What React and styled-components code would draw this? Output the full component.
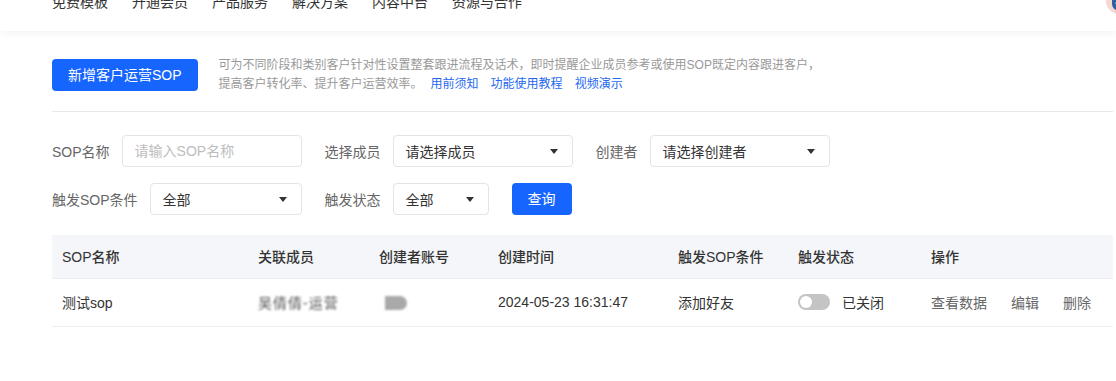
import React from "react";
import styled, { createGlobalStyle } from "styled-components";

const GlobalStyle = createGlobalStyle`
  html, body {
    margin: 0;
    padding: 0;
    background: #ffffff;
    overflow-x: hidden;
  }
  body {
    font-family: "Liberation Sans", "Noto Sans CJK SC", sans-serif;
    color: #333333;
    font-size: 14px;
  }
  * { box-sizing: border-box; }
`;

const TopNav = styled.header`
  height: 31px;
  display: flex;
  align-items: flex-start;
  gap: 24px;
  padding-left: 52px;
  overflow: hidden;
  background: #fff;
  box-shadow: 0 2px 8px rgba(0, 0, 0, 0.05);
  position: relative;
  z-index: 1;
`;

const NavItem = styled.span`
  font-size: 14px;
  line-height: 20px;
  margin-top: -8px;
  color: #333;
  white-space: nowrap;
`;

const Avatar = styled.span`
  margin-left: auto;
  margin-right: -16px;
  margin-top: -12px;
  width: 26px;
  height: 26px;
  border-radius: 50%;
  background: #f5d8d2;
  display: flex;
  align-items: flex-end;
  justify-content: flex-end;
  padding: 0 1px 1px 0;
  flex: none;
`;

const Main = styled.main`
  padding: 25px 3px 40px 52px;
`;

const IntroRow = styled.div`
  display: flex;
  align-items: center;
  gap: 21px;
`;

const PrimaryButton = styled.button`
  height: 32px;
  padding: 0 ${(p) => (p.$compact ? "0" : "16px")};
  width: ${(p) => (p.$compact ? "60px" : "auto")};
  border: none;
  border-radius: 4px;
  background: #1765ff;
  color: #fff;
  font-family: inherit;
  font-size: 14px;
  line-height: 32px;
  cursor: pointer;
  white-space: nowrap;
  flex: none;
`;

const Description = styled.p`
  margin: 0;
  font-size: 12px;
  line-height: 19px;
  color: #999;
  white-space: nowrap;
`;

const DocLink = styled.a`
  color: #2468f2;
  text-decoration: none;
  margin-left: ${(p) => (p.$first ? "8px" : "12px")};
`;

const Divider = styled.hr`
  margin: 17px 0 0 0;
  border: none;
  height: 1px;
  background: #e8e8e8;
`;

const Filters = styled.div`
  margin-top: 23px;
  display: flex;
  flex-direction: column;
  gap: 16px;
`;

const FilterRow = styled.div`
  display: flex;
  align-items: center;
  gap: 23px;
`;

const Field = styled.label`
  display: flex;
  align-items: center;
  gap: 12px;
`;

const FieldLabel = styled.span`
  font-size: 14px;
  color: #666;
  white-space: nowrap;
`;

const TextInput = styled.input`
  width: ${(p) => p.$w}px;
  height: 32px;
  border: 1px solid #e4e4e4;
  border-radius: 4px;
  padding: 0 12px;
  font-family: inherit;
  font-size: 14px;
  color: #333;
  outline: none;
  &::placeholder {
    color: #bdbdbd;
  }
`;

const Select = styled.div`
  width: ${(p) => p.$w}px;
  height: 32px;
  border: 1px solid #e4e4e4;
  border-radius: 4px;
  padding: 0 14px 0 12px;
  display: flex;
  align-items: center;
  justify-content: space-between;
  font-size: 14px;
  color: #333;
  background: #fff;
`;

const Caret = styled.span`
  width: 0;
  height: 0;
  border-left: 4px solid transparent;
  border-right: 4px solid transparent;
  border-top: 5px solid #333;
`;

const Table = styled.table`
  margin-top: 20px;
  width: 100%;
  border-collapse: collapse;
  table-layout: fixed;
`;

const Th = styled.th`
  height: 43px;
  padding: 0 10px;
  background: #f5f6f9;
  border-bottom: 1px solid #eceef2;
  text-align: left;
  font-weight: 500;
  font-size: 14px;
  color: #333;
  white-space: nowrap;
`;

const Td = styled.td`
  height: 48px;
  padding: 0 10px;
  border-bottom: 1px solid #eceef2;
  font-size: 14px;
  color: #333;
  white-space: nowrap;
`;

const Blurred = styled.span`
  color: #555;
  filter: blur(1px);
  letter-spacing: 1px;
`;

const BlurBlock = styled.span`
  display: inline-block;
  margin-left: 6px;
  width: 22px;
  height: 14px;
  background: #a9a9a9;
  border-radius: 0 7px 7px 0;
  filter: blur(0.8px);
  vertical-align: middle;
`;

const StatusCell = styled.div`
  display: flex;
  align-items: center;
  gap: 12px;
`;

const Switch = styled.span`
  width: 32px;
  height: 16px;
  border-radius: 8px;
  background: #c4c4c4;
  padding: 2px;
  display: flex;
  align-items: center;
  &::before {
    content: "";
    width: 12px;
    height: 12px;
    border-radius: 50%;
    background: #fff;
  }
`;

const Actions = styled.div`
  display: flex;
  gap: 24px;
`;

const ActionLink = styled.a`
  color: #666;
  text-decoration: none;
  cursor: pointer;
`;

const navItems = ["免费模板", "开通会员", "产品服务", "解决方案", "内容中台", "资源与合作"];

const columns = [
  { title: "SOP名称", w: 196 },
  { title: "关联成员", w: 121 },
  { title: "创建者账号", w: 119 },
  { title: "创建时间", w: 180 },
  { title: "触发SOP条件", w: 120 },
  { title: "触发状态", w: 133 },
  { title: "操作" },
];

export default function App() {
  return (
    <>
      <GlobalStyle />
      <TopNav>
        {navItems.map((n) => (
          <NavItem key={n}>{n}</NavItem>
        ))}
        <Avatar>
          <svg width="20" height="20" viewBox="0 0 20 20">
            <path d="M1 2h18v9c0 4-4 7-9 8C5 18 1 15 1 11z" fill="#2f5f9e" />
            <path d="M4 6h12M4 10h12" stroke="#7fa6d6" strokeWidth="1.4" />
          </svg>
        </Avatar>
      </TopNav>
      <Main>
        <IntroRow>
          <PrimaryButton>新增客户运营SOP</PrimaryButton>
          <Description>
            可为不同阶段和类别客户针对性设置整套跟进流程及话术，即时提醒企业成员参考或使用SOP既定内容跟进客户，
            <br />
            提高客户转化率、提升客户运营效率。
            <DocLink $first href="#">用前须知</DocLink>
            <DocLink href="#">功能使用教程</DocLink>
            <DocLink href="#">视频演示</DocLink>
          </Description>
        </IntroRow>
        <Divider />
        <Filters>
          <FilterRow>
            <Field>
              <FieldLabel>SOP名称</FieldLabel>
              <TextInput $w={180} placeholder="请输入SOP名称" />
            </Field>
            <Field>
              <FieldLabel>选择成员</FieldLabel>
              <Select $w={180}>
                请选择成员
                <Caret />
              </Select>
            </Field>
            <Field>
              <FieldLabel>创建者</FieldLabel>
              <Select $w={180}>
                请选择创建者
                <Caret />
              </Select>
            </Field>
          </FilterRow>
          <FilterRow>
            <Field>
              <FieldLabel>触发SOP条件</FieldLabel>
              <Select $w={152}>
                全部
                <Caret />
              </Select>
            </Field>
            <Field>
              <FieldLabel>触发状态</FieldLabel>
              <Select $w={96}>
                全部
                <Caret />
              </Select>
            </Field>
            <PrimaryButton $compact>查询</PrimaryButton>
          </FilterRow>
        </Filters>
        <Table>
          <colgroup>
            {columns.map((c) => (
              <col key={c.title} style={c.w ? { width: c.w } : undefined} />
            ))}
          </colgroup>
          <thead>
            <tr>
              {columns.map((c) => (
                <Th key={c.title}>{c.title}</Th>
              ))}
            </tr>
          </thead>
          <tbody>
            <tr>
              <Td>测试sop</Td>
              <Td>
                <Blurred>吴倩倩-运营</Blurred>
              </Td>
              <Td>
                <BlurBlock />
              </Td>
              <Td>2024-05-23 16:31:47</Td>
              <Td>添加好友</Td>
              <Td>
                <StatusCell>
                  <Switch />
                  已关闭
                </StatusCell>
              </Td>
              <Td>
                <Actions>
                  <ActionLink>查看数据</ActionLink>
                  <ActionLink>编辑</ActionLink>
                  <ActionLink>删除</ActionLink>
                </Actions>
              </Td>
            </tr>
          </tbody>
        </Table>
      </Main>
    </>
  );
}
